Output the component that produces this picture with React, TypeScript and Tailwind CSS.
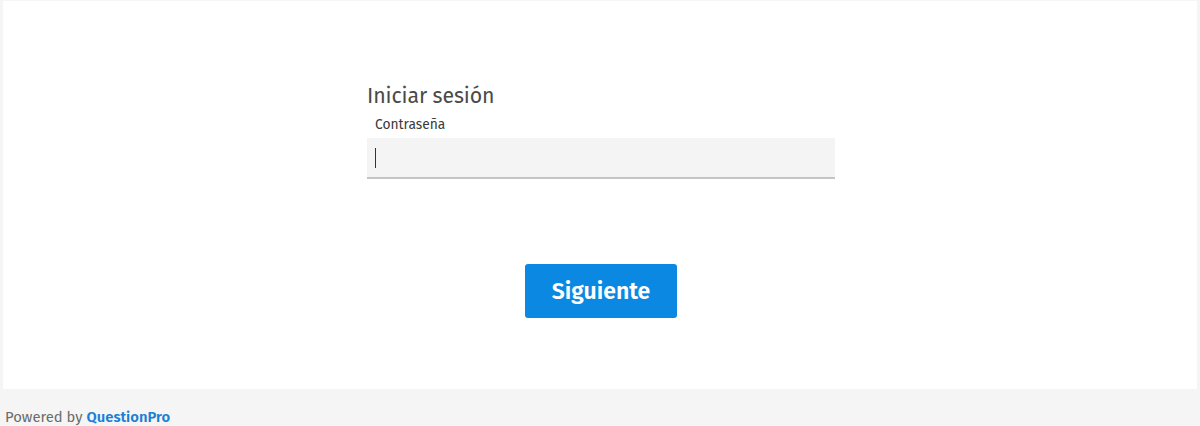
import React from "react";

export default function App() {
  return (
    <div
      className="w-[1200px] h-[426px] bg-[#f5f5f5] flex flex-col overflow-hidden"
      style={{ fontFamily: '"Fira Sans", "Open Sans", "Noto Sans", sans-serif' }}
    >
      <div className="mx-[3px] mt-[1px] h-[389px] bg-white flex flex-col items-center">
        <div className="w-[468px] mt-[80px] ml-[2px]">
          <h1 className="text-[21.3px] leading-[30px] text-[#4a4a4a] tracking-[-0.1px]">Iniciar sesión</h1>
          <div className="mt-[5px] pl-[8px] text-[13.8px] leading-[17px] text-[#3a3a3a]">Contraseña</div>
          <div className="mt-[5px] h-[41px] bg-[#f4f4f4] border-b-[2px] border-[#c4c4c4] flex items-center pl-[8px]">
            <div className="w-[1px] h-[20px] bg-[#333]" />
          </div>
        </div>
        <button className="mt-[85px] w-[152px] h-[54px] rounded-[3px] bg-[#0b89e2] text-white text-[23px] font-semibold ml-[2px]">
          Siguiente
        </button>
      </div>
      <div className="pl-[5px] mt-[19px] text-[14.8px] leading-[18px] text-[#6b6b6b]">
        Powered by <span className="text-[#1b7fd6] font-semibold">QuestionPro</span>
      </div>
    </div>
  );
}
